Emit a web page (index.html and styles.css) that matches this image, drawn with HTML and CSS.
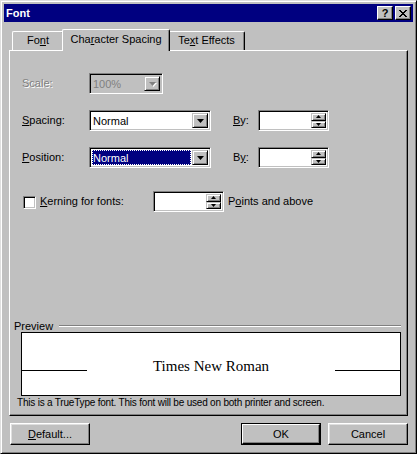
FILE: index.html
```html
<!DOCTYPE html>
<html lang="en">
<head>
    <meta charset="UTF-8">
    <title>Font</title>
    <link rel="stylesheet" href="styles.css">
</head>
<body>
    <div class="window">
        <div class="title-bar">
            <span class="title">Font</span>
            <div class="title-btns">
                <span class="tbtn help">?</span>
                <span class="tbtn close">
                    <svg width="8" height="7" viewBox="0 0 8 7"><path d="M0 0h2v1h1v1h2v-1h1v-1h2v1h-1v1h-1v1h-1v1h1v1h1v1h1v1h-2v-1h-1v-1h-2v1h-1v1h-2v-1h1v-1h1v-1h1v-1h-1v-1h-1v-1h-1z" fill="#000"/></svg>
                </span>
            </div>
        </div>

        <div class="tabs">
            <div class="tab tab-font">Fo<u>n</u>t</div>
            <div class="tab tab-active">Cha<u>r</u>acter Spacing</div>
            <div class="tab tab-effects">Te<u>x</u>t Effects</div>
        </div>

        <div class="panel">
            <div class="row row-scale">
                <span class="lbl disabled">Scale:</span>
                <div class="field combo combo-small disabled">
                    <span class="value">100%</span>
                    <span class="drop"><svg width="7" height="4" viewBox="0 0 7 4"><path d="M0 0h7L3.5 4z" fill="#808080"/></svg></span>
                </div>
            </div>

            <div class="row row-spacing">
                <span class="lbl"><u>S</u>pacing:</span>
                <div class="field combo">
                    <span class="value">Normal</span>
                    <span class="drop"><svg width="7" height="4" viewBox="0 0 7 4"><path d="M0 0h7L3.5 4z" fill="#000"/></svg></span>
                </div>
                <span class="by"><u>B</u>y:</span>
                <div class="field spin">
                    <span class="value"></span>
                    <span class="spin-btns">
                        <span class="sbtn"><svg width="5" height="3" viewBox="0 0 5 3"><path d="M2.5 0L5 3H0z" fill="#000"/></svg></span>
                        <span class="sbtn"><svg width="5" height="3" viewBox="0 0 5 3"><path d="M0 0h5L2.5 3z" fill="#000"/></svg></span>
                    </span>
                </div>
            </div>

            <div class="row row-position">
                <span class="lbl"><u>P</u>osition:</span>
                <div class="field combo">
                    <span class="value selected">Normal</span>
                    <span class="drop"><svg width="7" height="4" viewBox="0 0 7 4"><path d="M0 0h7L3.5 4z" fill="#000"/></svg></span>
                </div>
                <span class="by">B<u>y</u>:</span>
                <div class="field spin">
                    <span class="value"></span>
                    <span class="spin-btns">
                        <span class="sbtn"><svg width="5" height="3" viewBox="0 0 5 3"><path d="M2.5 0L5 3H0z" fill="#000"/></svg></span>
                        <span class="sbtn"><svg width="5" height="3" viewBox="0 0 5 3"><path d="M0 0h5L2.5 3z" fill="#000"/></svg></span>
                    </span>
                </div>
            </div>

            <div class="row row-kerning">
                <span class="checkbox"></span>
                <span class="kern-lbl"><u>K</u>erning for fonts:</span>
                <div class="field spin">
                    <span class="value"></span>
                    <span class="spin-btns">
                        <span class="sbtn"><svg width="5" height="3" viewBox="0 0 5 3"><path d="M2.5 0L5 3H0z" fill="#000"/></svg></span>
                        <span class="sbtn"><svg width="5" height="3" viewBox="0 0 5 3"><path d="M0 0h5L2.5 3z" fill="#000"/></svg></span>
                    </span>
                </div>
                <span class="points">P<u>o</u>ints and above</span>
            </div>

            <div class="preview">
                <div class="preview-head">
                    <span>Preview</span>
                    <span class="etch"></span>
                </div>
                <div class="preview-box">
                    <span class="base-line"></span>
                    <span class="sample">Times New Roman</span>
                    <span class="base-line"></span>
                </div>
            </div>
            <div class="note">This is a TrueType font. This font will be used on both printer and screen.</div>
        </div>

        <div class="buttons">
            <span class="btn"><u>D</u>efault...</span>
            <span class="spacer"></span>
            <span class="btn btn-default"><span class="btn-inner">OK</span></span>
            <span class="btn">Cancel</span>
        </div>
    </div>
</body>
</html>
```

FILE: styles.css
```css
body {
    margin: 0;
    background: #c0c0c0;
    font-family: 'Liberation Sans', Arial, sans-serif;
    font-size: 11px;
    line-height: 13px;
    color: #000;
}
u {
    text-decoration-thickness: 1px;
    text-underline-offset: 1px;
}
.window {
    width: 417px;
    height: 454px;
    box-sizing: border-box;
    padding: 3px;
    background: #c0c0c0;
    border: 1px solid;
    border-color: #dfdfdf #000 #000 #dfdfdf;
    box-shadow: inset 1px 1px #fff, inset -1px -1px #808080;
    display: flex;
    flex-direction: column;
}
.title-bar {
    height: 18px;
    background: #000080;
    display: flex;
    align-items: center;
    justify-content: space-between;
    padding: 0 2px 0 2px;
}
.title {
    color: #fff;
    font-weight: bold;
    font-size: 11px;
}
.title-btns {
    display: flex;
    gap: 2px;
}
.tbtn {
    width: 16px;
    height: 14px;
    box-sizing: border-box;
    background: #c0c0c0;
    border: 1px solid;
    border-color: #fff #000 #000 #fff;
    box-shadow: inset -1px -1px #808080;
    display: flex;
    align-items: center;
    justify-content: center;
    font-weight: bold;
    font-size: 11px;
    line-height: 11px;
}
.tbtn svg { display: block; }

/* Tabs */
.tabs {
    display: flex;
    align-items: flex-end;
    height: 21px;
    margin: 7px 5px 0 5px;
    padding-left: 3px;
}
.tab {
    height: 19px;
    box-sizing: border-box;
    border: 1px solid;
    border-color: #fff #000 transparent #fff;
    border-bottom: none;
    border-radius: 2px 2px 0 0;
    box-shadow: inset -1px 0 #808080;
    display: flex;
    align-items: center;
    justify-content: center;
    padding-bottom: 1px;
}
.tab-font { width: 52px; }
.tab-active {
    width: 108px;
    height: 22px;
    margin: 0 -2px -1px -2px;
    background: #c0c0c0;
    position: relative;
    z-index: 1;
    padding-bottom: 2px;
}
.tab-effects { width: 77px; }

/* Panel */
.panel {
    height: 366px;
    box-sizing: border-box;
    margin: 0 5px;
    border: 1px solid;
    border-color: #fff #000 #000 #fff;
    box-shadow: inset -1px -1px #808080;
    display: flex;
    flex-direction: column;
}
.row {
    display: flex;
    align-items: center;
    height: 21px;
    padding-left: 12px;
}
.row-scale { margin-top: 22px; }
.row-spacing, .row-position { margin-top: 16px; }
.row-kerning { margin-top: 23px; padding-left: 13px; }
.lbl { width: 67px; }
.disabled { color: #808080; text-shadow: 1px 1px #fff; }

.field {
    height: 21px;
    box-sizing: border-box;
    border: 1px solid;
    border-color: #808080 #fff #fff #808080;
    box-shadow: inset 1px 1px #000, inset -1px -1px #c0c0c0;
    background: #fff;
    padding: 2px 2px 2px 2px;
    display: flex;
}
.field .value {
    flex: 1;
    padding-left: 1px;
    line-height: 16px;
    white-space: nowrap;
}
.combo { width: 122px; }
.combo-small { width: 74px; background: #c0c0c0; }
.combo-small .value { color: #808080; text-shadow: none; }
.value.selected {
    background: #000080;
    color: #fff;
    outline: 1px dotted #fff;
    outline-offset: -1px;
    margin-right: 1px;
}
.drop {
    width: 16px;
    box-sizing: border-box;
    background: #c0c0c0;
    border: 1px solid;
    border-color: #c0c0c0 #000 #000 #c0c0c0;
    box-shadow: inset 1px 1px #fff, inset -1px -1px #808080;
    display: flex;
    align-items: center;
    justify-content: center;
}
.drop svg { display: block; }
.combo-small .drop svg { filter: drop-shadow(1px 1px 0 #fff); }

.by {
    width: 25px;
    margin-left: 22px;
}
.spin { width: 71px; }
.spin-btns {
    width: 15px;
    display: flex;
    flex-direction: column;
}
.sbtn {
    flex: 1;
    box-sizing: border-box;
    background: #c0c0c0;
    border: 1px solid;
    border-color: #c0c0c0 #000 #000 #c0c0c0;
    box-shadow: inset 1px 1px #fff, inset -1px -1px #808080;
    display: flex;
    align-items: center;
    justify-content: center;
}
.sbtn svg { display: block; }

.checkbox {
    width: 13px;
    height: 13px;
    box-sizing: border-box;
    background: #fff;
    border: 1px solid;
    border-color: #808080 #fff #fff #808080;
    box-shadow: inset 1px 1px #000, inset -1px -1px #c0c0c0;
    margin-right: 4px;
    margin-top: 1px;
}
.kern-lbl { width: 113px; }
.points { margin-left: 4px; }

/* Preview */
.preview {
    margin-top: 108px;
    padding: 0 6px 0 4px;
}
.preview-head {
    height: 12px;
    display: flex;
    align-items: center;
}
.etch {
    flex: 1;
    margin-left: 6px;
    border-top: 1px solid #808080;
    border-bottom: 1px solid #fff;
}
.preview-box {
    margin-left: 7px;
    width: 380px;
    height: 64px;
    box-sizing: border-box;
    border: 1px solid #000;
    background: #fff;
    display: flex;
    align-items: baseline;
    padding-top: 24px;
}
.base-line {
    width: 65px;
    height: 1px;
    background: #000;
}
.sample {
    flex: 1;
    text-align: center;
    font-family: 'Liberation Serif', 'Times New Roman', serif;
    font-size: 15px;
    line-height: 18px;
}
.note {
    margin-left: 7px;
    white-space: nowrap;
    font-size: 10px;
    letter-spacing: -0.2px;
}

/* Buttons */
.buttons {
    display: flex;
    margin: 7px 5px 0 6px;
    gap: 7px;
}
.spacer { flex: 1; }
.btn {
    width: 80px;
    height: 22px;
    box-sizing: border-box;
    border: 1px solid;
    border-color: #fff #000 #000 #fff;
    box-shadow: inset -1px -1px #808080, inset 1px 1px #dfdfdf;
    display: flex;
    align-items: center;
    justify-content: center;
}
.btn-default {
    border-color: #000;
    box-shadow: none;
    padding: 0;
}
.btn-inner {
    width: 100%;
    height: 100%;
    box-sizing: border-box;
    border: 1px solid;
    border-color: #fff #000 #000 #fff;
    box-shadow: inset -1px -1px #808080;
    display: flex;
    align-items: center;
    justify-content: center;
}
```
